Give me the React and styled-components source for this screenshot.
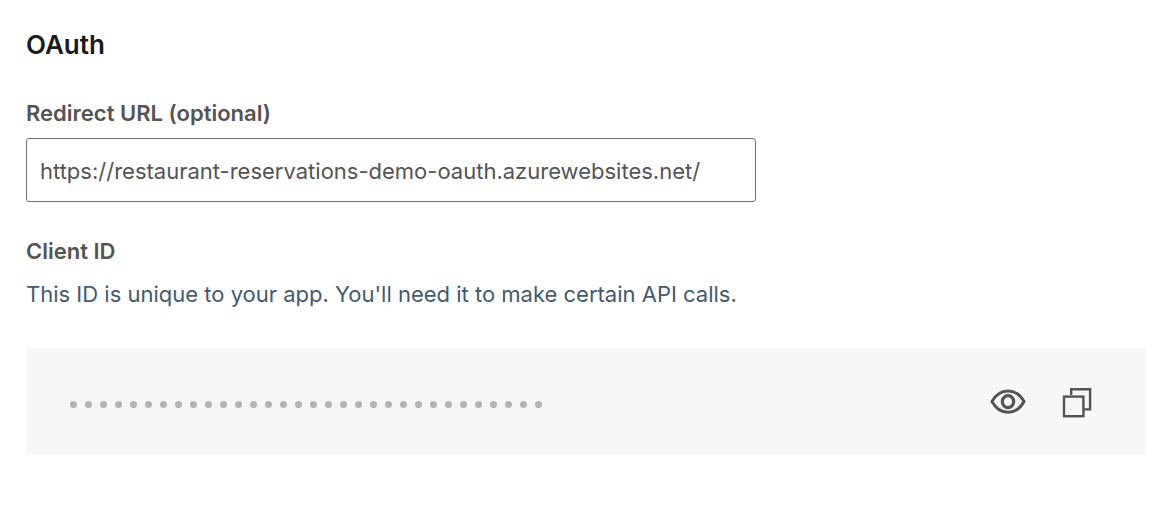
import React, { useState } from "react";
import styled, { createGlobalStyle } from "styled-components";

const GlobalStyle = createGlobalStyle`
  *, *::before, *::after { box-sizing: border-box; }
  body {
    margin: 0;
    background: #fff;
    color: #545454;
    font-family: Inter, "Liberation Sans", sans-serif;
    font-size: 22px;
    line-height: 28px;
  }
`;

const Page = styled.main`
  padding: 28px 14px 60px 26px;
`;

const Title = styled.h2`
  margin: 0 0 37px;
  color: #1a1a1a;
  font-size: 26px;
  font-weight: 600;
  line-height: 34px;
`;

const Field = styled.div`
  display: flex;
  flex-direction: column;
  max-width: 730px;
  margin-bottom: 35px;
`;

const Label = styled.label`
  margin-bottom: 11px;
  font-weight: 600;
`;

const TextInput = styled.input`
  width: 100%;
  height: 64px;
  padding: 2px 13px 0;
  border: 1px solid #707070;
  border-radius: 3px;
  background: #fff;
  color: inherit;
  font: inherit;
`;

const SectionLabel = styled.h3`
  margin: 0 0 15px;
  font-size: 22px;
  font-weight: 600;
`;

const Hint = styled.p`
  margin: 0 0 40px;
  color: #425b6f;
`;

const SecretBar = styled.div`
  display: flex;
  align-items: center;
  justify-content: space-between;
  min-height: 107px;
  padding: 0 53px 0 44px;
  background: #f7f7f7;
`;

const Mask = styled.div`
  display: flex;
  gap: 8px;
  padding-top: 6px;
`;

const Dot = styled.span`
  width: 7px;
  height: 7px;
  border-radius: 50%;
  background: #b3b3b3;
`;

const Actions = styled.div`
  display: flex;
  gap: 33px;
`;

const IconButton = styled.button`
  display: flex;
  padding: 0;
  border: 0;
  background: none;
  color: #545454;
  cursor: pointer;
`;

const EyeIcon = () => (
  <svg width="36" height="36" viewBox="0 0 36 36" fill="none" stroke="currentColor" aria-hidden="true">
    <path d="M2 17.500C5.8 10.500 11.2 7 18 7S30.2 10.500 34 17.500C30.2 24.700 24.8 28.200 18 28.200S5.8 24.700 2 17.500Z" strokeWidth="2.900" />
    <ellipse cx="18" cy="17.600" rx="5.700" ry="6" strokeWidth="3.200" />
  </svg>
);

const CopyIcon = () => (
  <svg width="34" height="36" viewBox="0 0 34 36" fill="none" stroke="currentColor" strokeWidth="2.400" aria-hidden="true">
    <path d="M12.200 11.300V5.300H31.100V25.400H25" />
    <rect x="5" y="12.600" width="19.400" height="19.600" />
  </svg>
);

const ID_LENGTH = 32;

export default function App() {
  const [url, setUrl] = useState("https://restaurant-reservations-demo-oauth.azurewebsites.net/");
  return (
    <>
      <GlobalStyle />
      <Page>
        <Title>OAuth</Title>
        <Field>
          <Label htmlFor="redirect-url">Redirect URL (optional)</Label>
          <TextInput id="redirect-url" type="text" value={url} onChange={(e) => setUrl(e.target.value)} />
        </Field>
        <SectionLabel>Client ID</SectionLabel>
        <Hint>This ID is unique to your app. You'll need it to make certain API calls.</Hint>
        <SecretBar>
          <Mask role="img" aria-label="Hidden client ID">
            {Array.from({ length: ID_LENGTH }, (_, i) => (
              <Dot key={i} />
            ))}
          </Mask>
          <Actions>
            <IconButton type="button" aria-label="Show client ID">
              <EyeIcon />
            </IconButton>
            <IconButton type="button" aria-label="Copy client ID">
              <CopyIcon />
            </IconButton>
          </Actions>
        </SecretBar>
      </Page>
    </>
  );
}
